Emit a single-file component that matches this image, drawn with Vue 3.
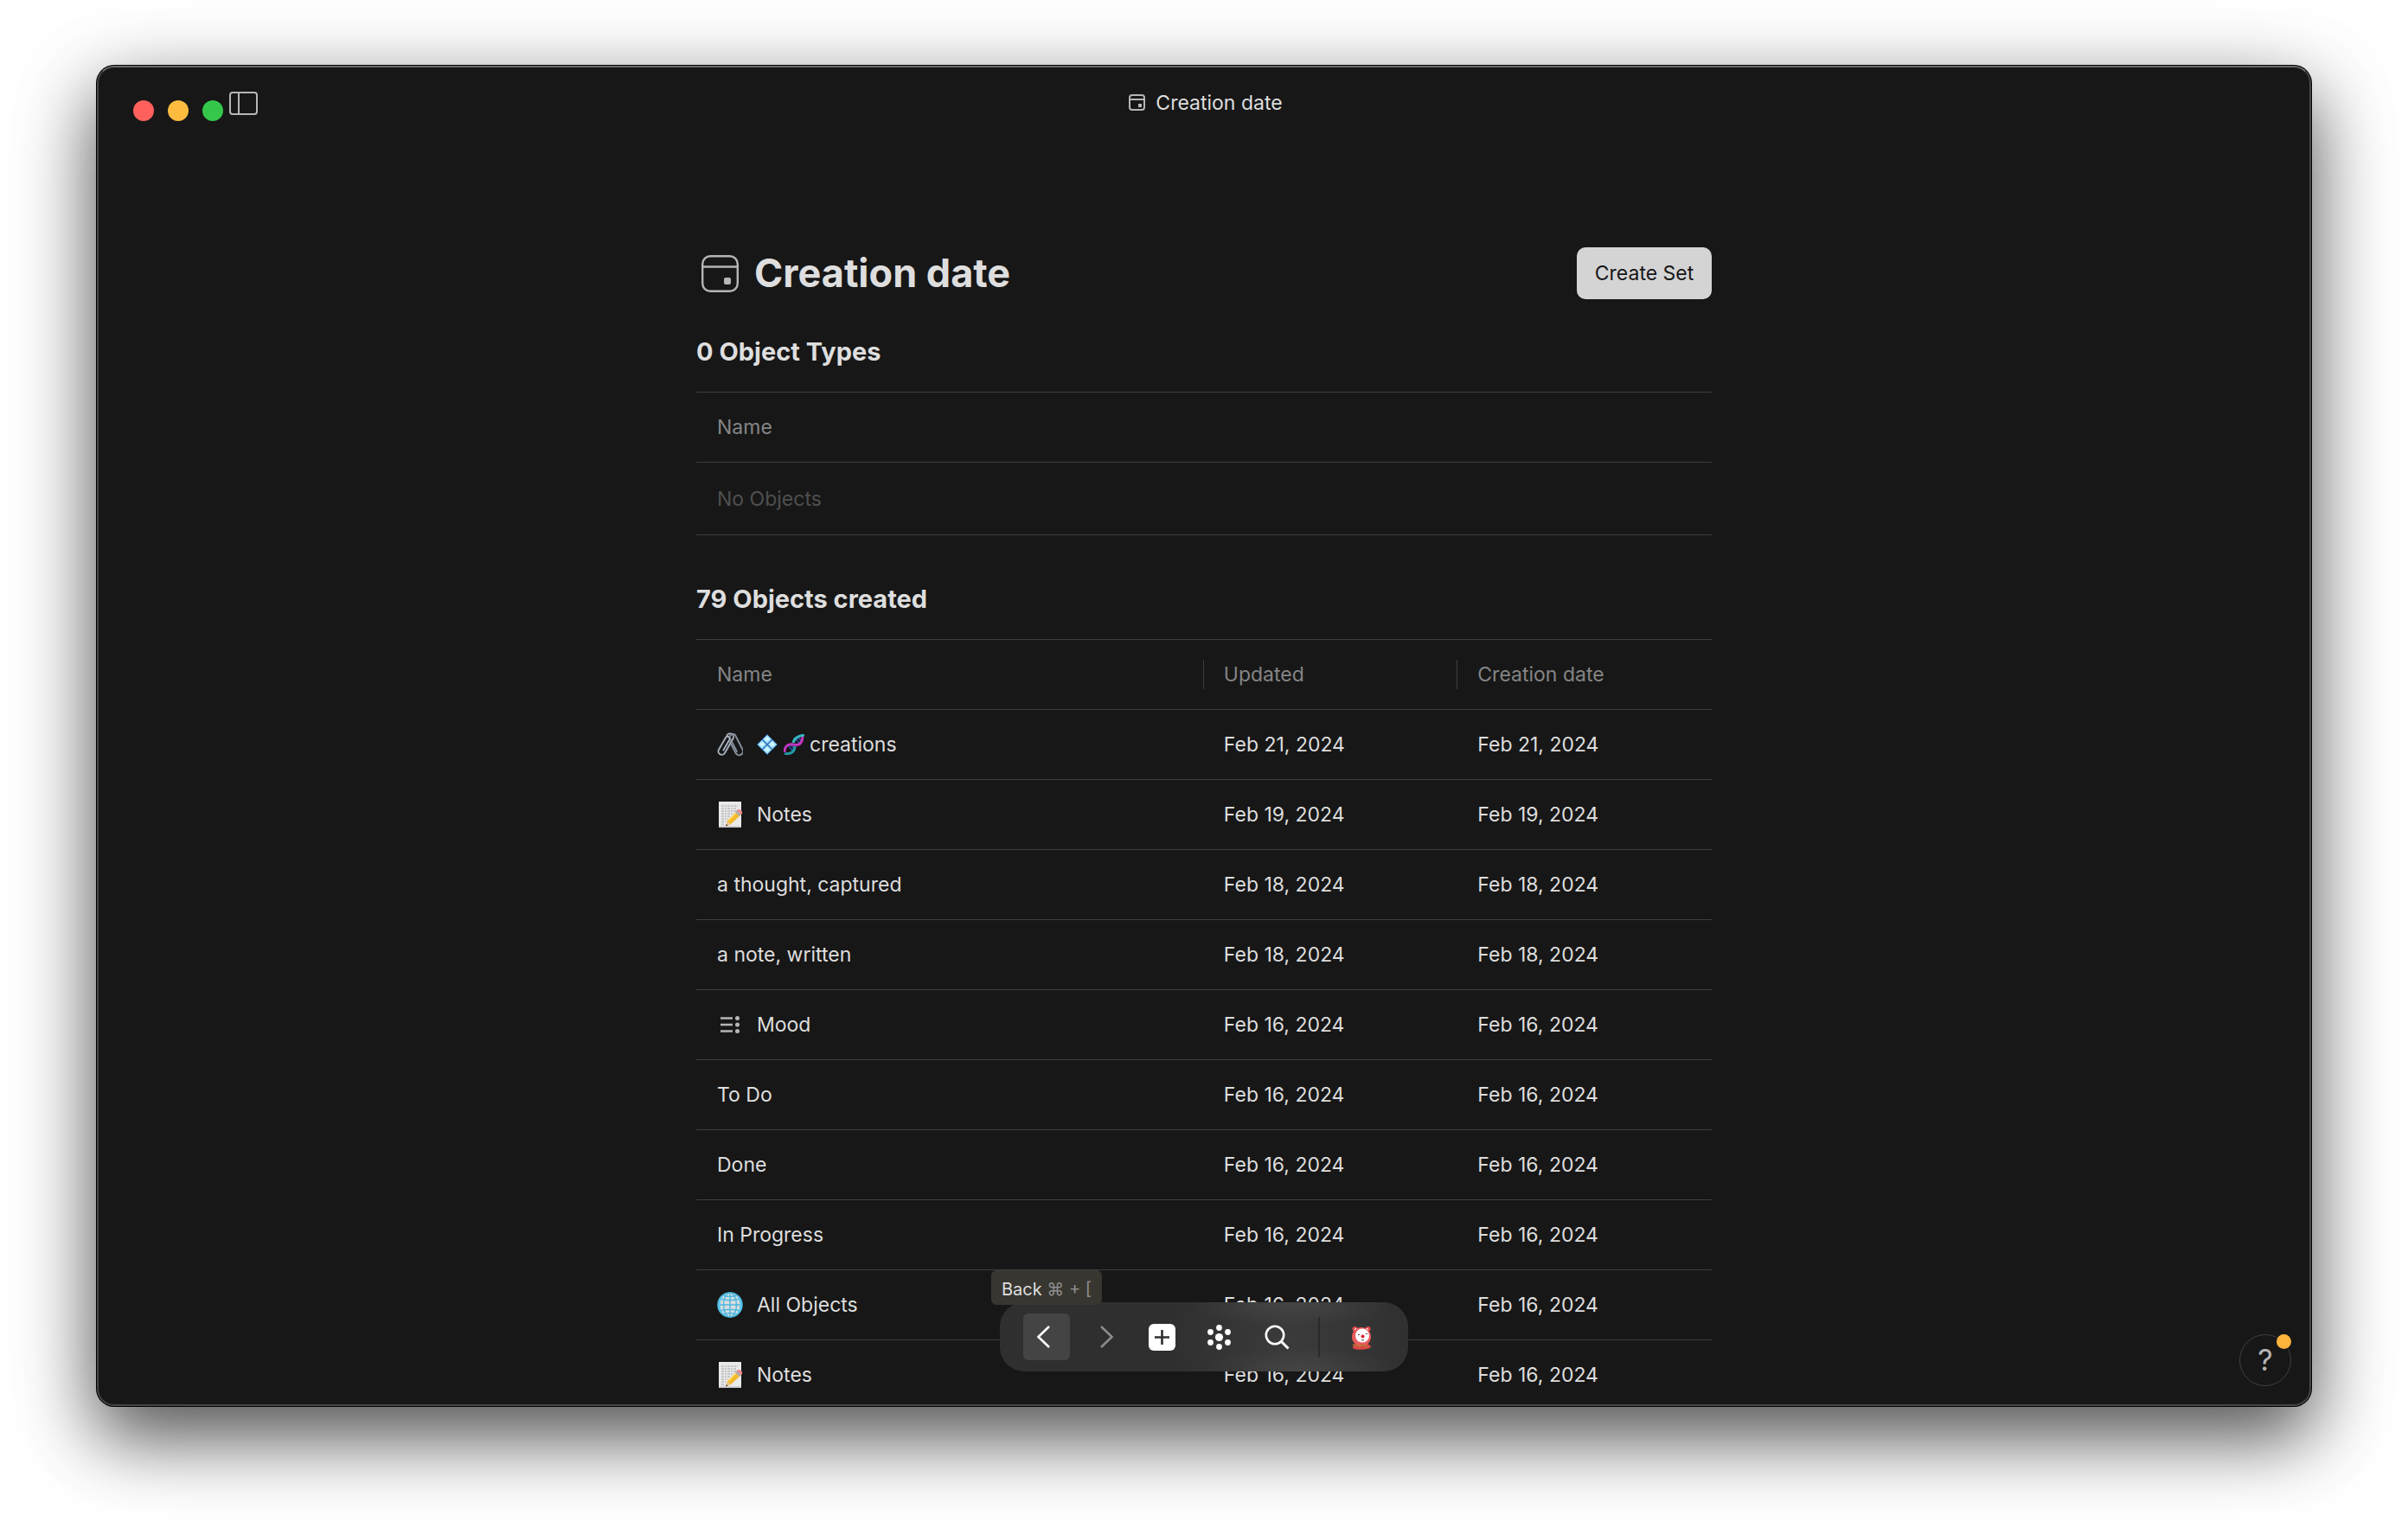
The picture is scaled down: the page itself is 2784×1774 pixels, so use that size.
<script setup>
const objects = [
  { icon: 'clips', name: 'creations', prefix: true, updated: 'Feb 21, 2024', created: 'Feb 21, 2024' },
  { icon: 'memo', name: 'Notes', updated: 'Feb 19, 2024', created: 'Feb 19, 2024' },
  { name: 'a thought, captured', updated: 'Feb 18, 2024', created: 'Feb 18, 2024' },
  { name: 'a note, written', updated: 'Feb 18, 2024', created: 'Feb 18, 2024' },
  { icon: 'relation', name: 'Mood', updated: 'Feb 16, 2024', created: 'Feb 16, 2024' },
  { name: 'To Do', updated: 'Feb 16, 2024', created: 'Feb 16, 2024' },
  { name: 'Done', updated: 'Feb 16, 2024', created: 'Feb 16, 2024' },
  { name: 'In Progress', updated: 'Feb 16, 2024', created: 'Feb 16, 2024' },
  { icon: 'globe', name: 'All Objects', updated: 'Feb 16, 2024', created: 'Feb 16, 2024' },
  { icon: 'memo', name: 'Notes', updated: 'Feb 16, 2024', created: 'Feb 16, 2024' },
]
</script>

<template>
  <div class="desktop">
    <div class="window">
      <header class="titlebar">
        <div class="controls">
          <div class="lights">
            <button class="light red" aria-label="Close"></button>
            <button class="light yellow" aria-label="Minimize"></button>
            <button class="light green" aria-label="Zoom"></button>
          </div>
          <button class="plain" aria-label="Toggle sidebar">
            <svg width="33" height="27" viewBox="0 0 33 27" fill="none" stroke="#b6b6b6" stroke-width="2">
              <rect x="1" y="1" width="31" height="25" rx="3" />
              <path d="M11 1v25" />
            </svg>
          </button>
        </div>
        <div class="crumb">
          <svg width="20" height="20" viewBox="0 0 20 20" fill="none" stroke="#b6b6b6" stroke-width="2">
            <rect x="1" y="1" width="17" height="17" rx="3" />
            <path d="M1 6h17" />
            <rect x="11" y="11" width="4" height="4" fill="#b6b6b6" stroke="none" />
          </svg>
          <span>Creation date</span>
        </div>
      </header>

      <main class="page">
        <div class="head">
          <svg width="43" height="43" viewBox="0 0 43 43" fill="none" stroke="#b6b6b6" stroke-width="2.4">
            <rect x="1.2" y="1.2" width="40.6" height="40.6" rx="9" />
            <path d="M1 13.5h41" />
            <rect x="26" y="26" width="8" height="8" rx="2" fill="#b6b6b6" stroke="none" />
          </svg>
          <h1>Creation date</h1>
          <button class="create">Create Set</button>
        </div>

        <section class="block first">
          <h2>0 Object Types</h2>
          <table>
            <thead>
              <tr><th scope="col"><span class="cell">Name</span></th></tr>
            </thead>
            <tbody>
              <tr class="empty"><td><span class="cell">No Objects</span></td></tr>
            </tbody>
          </table>
        </section>

        <section class="block">
          <h2>79 Objects created</h2>
          <table>
            <colgroup>
              <col class="col-name" />
              <col class="col-date" />
              <col />
            </colgroup>
            <thead>
              <tr>
                <th scope="col"><span class="cell">Name</span></th>
                <th scope="col"><span class="cell divided">Updated</span></th>
                <th scope="col"><span class="cell divided">Creation date</span></th>
              </tr>
            </thead>
            <tbody>
              <tr v-for="(o, i) in objects" :key="i">
                <td>
                  <span class="cell">
                    <svg v-if="o.icon === 'clips'" class="icon" viewBox="0 0 30 30" fill="none" stroke-linecap="round">
                      <g transform="translate(21 15) rotate(-27)">
                        <path d="M-1 8V-9a3.500 3.500 0 0 1 7 0V9a4.500 4.500 0 0 1-9 0V-6" transform="translate(-1 0)" stroke="#5d6570" stroke-width="2.2" />
                        <path d="M-1 8V-9a3.500 3.500 0 0 1 7 0V9a4.500 4.500 0 0 1-9 0V-6" transform="translate(-1 0)" stroke="#98a2ad" stroke-width="1" />
                      </g>
                      <g transform="translate(10 15) rotate(30)">
                        <path d="M1 7V-7a2.500 2.500 0 0 0-5 0V9a4 4 0 0 0 8 0V-10a4 4 0 0 0-8 0" stroke="#5d6570" stroke-width="2.4" />
                        <path d="M1 7V-7a2.500 2.500 0 0 0-5 0V9a4 4 0 0 0 8 0V-10a4 4 0 0 0-8 0" stroke="#c3cad2" stroke-width="1.1" />
                      </g>
                    </svg>
                    <svg v-else-if="o.icon === 'memo'" class="icon" viewBox="0 0 30 30">
                      <path d="M2 0h26v30H2z" fill="#e9e9ea" />
                      <path d="M2 28h26v2H2z" fill="#cfcfd1" />
                      <path d="M5 5h19M5 8h17M5 11h18M5 14h14M5 17h10M5 20h8M5 23h5M5 26h4" stroke="#a3a3a6" stroke-width="1" stroke-dasharray="3 1 2 1" />
                      <path d="M10 28l2-6L23 11l5 4-12 11z" fill="#f4b92c" />
                      <path d="M13 22L23 12" stroke="#ffdc6a" stroke-width="1.5" />
                      <path d="M10 28.5l2-6 4 3.5z" fill="#e9c48d" />
                      <path d="M10 28.5l1-2.500 1.500 1.500z" fill="#333" />
                      <path d="M21 12.5l2-2.500 5 4.500-2 2.500z" fill="#a9adb3" />
                      <path d="M22.500 10.500c2-3 6-1 6.500 1.500.5 1.500-.5 2.500-1 3z" fill="#f08c8c" />
                    </svg>
                    <svg v-else-if="o.icon === 'globe'" class="icon" viewBox="0 0 30 30" fill="none">
                      <circle cx="15" cy="15" r="14" fill="#d9dde0" stroke="#46b4dc" stroke-width="1.6" />
                      <g stroke="#4bb8de" stroke-width="1.4">
                        <ellipse cx="15" cy="15" rx="7.5" ry="14" />
                        <path d="M15 1v28M1 15h28M3 8q12 3.500 24 0M3 22q12-3.500 24 0M7 4q8 3 16 0M7 26q8-3 16 0" />
                      </g>
                      <path d="M6 5Q-1 15 6 25M24 5q7 10 0 20" stroke="#63c6e8" stroke-width="2" />
                    </svg>
                    <svg v-else-if="o.icon === 'relation'" class="icon" viewBox="0 0 30 30">
                      <path d="M4 7.5h14M4 15h14M4 22.500h14" stroke="#b6b6b6" stroke-width="2.5" />
                      <g fill="#b6b6b6">
                        <circle cx="23.500" cy="7.5" r="2.5" />
                        <circle cx="23.500" cy="15" r="2.5" />
                        <circle cx="23.500" cy="22.500" r="2.5" />
                      </g>
                    </svg>
                    <span v-if="o.prefix" class="emojis">
                      <svg width="24" height="24" viewBox="0 0 24 24">
                        <path d="M12 0l12 12-12 12L0 12z" fill="#2f6cb8" />
                        <g fill="#a5e4fb">
                          <path d="M12 1l5 5-5 5-5-5z" />
                          <path d="M12 13l5 5-5 5-5-5z" />
                          <path d="M6 7l5 5-5 5-5-5z" />
                          <path d="M18 7l5 5-5 5-5-5z" />
                        </g>
                        <g fill="#d4f6ff">
                          <path d="M12 3l3 3-3 2-3-2zM6 9l3 3-3 2-3-2zM18 9l3 3-3 2-3-2zM12 15l3 3-3 2-3-2z" />
                        </g>
                      </svg>
                      <svg width="24" height="24" viewBox="0 0 24 24" fill="none">
                        <path d="M5 13l6 7M8 12l5 6M13 5l6 6M16 4l5 4" stroke="#2d4fb0" stroke-width="1.5" />
                        <path d="M1 23c8 0 12-3 12-9" stroke="#239aa6" stroke-width="3" />
                        <path d="M1 21c0-8 5-10 10-9s10 1 11-9" stroke="#c436c0" stroke-width="3" />
                        <path d="M11 10c1-6 6-8 13-9" stroke="#37b9c0" stroke-width="3" />
                      </svg>
                    </span>
                    <span>{{ o.name }}</span>
                  </span>
                </td>
                <td><span class="cell">{{ o.updated }}</span></td>
                <td><span class="cell">{{ o.created }}</span></td>
              </tr>
            </tbody>
          </table>
        </section>
      </main>

      <nav class="toolbar" aria-label="Navigation">
        <button class="tool active" aria-label="Back">
          <svg width="54" height="54" viewBox="0 0 54 54" fill="none" stroke="#fff" stroke-width="2.6">
            <path d="M30 15L17.500 27L30 39" />
          </svg>
        </button>
        <button class="tool" aria-label="Forward">
          <svg width="54" height="54" viewBox="0 0 54 54" fill="none" stroke="#8c8c8c" stroke-width="2.6">
            <path d="M23 15L35.500 27L23 39" />
          </svg>
        </button>
        <button class="tool" aria-label="Create">
          <svg width="54" height="54" viewBox="0 0 54 54">
            <rect x="11" y="12" width="31" height="31" rx="6" fill="#fff" />
            <path d="M26.500 19v17M18 27.500h17" stroke="#2f2f2f" stroke-width="2.6" />
          </svg>
        </button>
        <button class="tool" aria-label="Graph">
          <svg width="54" height="54" viewBox="0 0 54 54" fill="#fff">
            <circle cx="25.500" cy="27.500" r="4.6" />
            <circle cx="25.500" cy="16.500" r="3.4" />
            <circle cx="25.500" cy="38.500" r="3.4" />
            <circle cx="15.500" cy="21.500" r="3.4" />
            <circle cx="35.500" cy="21.500" r="3.4" />
            <circle cx="15.500" cy="33.500" r="3.4" />
            <circle cx="35.500" cy="33.500" r="3.4" />
          </svg>
        </button>
        <button class="tool" aria-label="Search">
          <svg width="54" height="54" viewBox="0 0 54 54" fill="none" stroke="#fff" stroke-width="2.6">
            <circle cx="23" cy="25" r="10.2" />
            <path d="M30.500 32.500l8 8" stroke-width="3" />
          </svg>
        </button>
        <span class="divider"></span>
        <button class="tool" aria-label="Space">
          <svg width="54" height="54" viewBox="0 0 54 54">
            <circle cx="19.500" cy="18" r="3" fill="#e04a4c" />
            <circle cx="34.500" cy="18" r="3" fill="#e04a4c" />
            <circle cx="20.500" cy="18.500" r="1.5" fill="#fff" />
            <circle cx="33.500" cy="18.500" r="1.5" fill="#fff" />
            <path d="M17 40c0-4 3-5 5-5h10c3 0 6 2 6 4-3 3-18 4-21 1z" fill="#dd4648" />
            <circle cx="27" cy="27" r="11" fill="#e85a5c" />
            <circle cx="28" cy="25.500" r="8" fill="#fff" />
            <path d="M17 36l8 2 4-2 5 3" fill="none" stroke="#b5762b" stroke-width="1.5" />
            <circle cx="28.500" cy="26.500" r="2" fill="#d8232c" />
            <path d="M23 24.500h2M32 23.500h2M27 30.500q2 1 3 0" fill="none" stroke="#444" stroke-width="1" />
          </svg>
        </button>
        <div class="tooltip" role="tooltip">Back <span>⌘ + [</span></div>
      </nav>

      <button class="help" aria-label="Help">?<i></i></button>
    </div>
  </div>
</template>

<style>
body {
  margin: 0;
  background: #fff;
}
</style>

<style scoped>
* {
  box-sizing: border-box;
}

.desktop {
  height: 100vh;
  padding: 76px 112px 148px;
  overflow: hidden;
  color: #dedede;
  font-family: Inter, "Liberation Sans", sans-serif;
  font-size: 23px;
  line-height: 30px;
}

.window {
  position: relative;
  height: 100%;
  overflow: hidden;
  border-radius: 20px;
  background: #171717;
  box-shadow:
    0 0 0 1px #000,
    0 36px 84px rgba(0, 0, 0, 0.62),
    0 20px 110px rgba(0, 0, 0, 0.16);
}

.window::after {
  content: "";
  position: absolute;
  inset: 0;
  border: 2px solid #454545;
  border-top-color: #6a6a6a;
  border-radius: 20px;
  pointer-events: none;
}

button {
  padding: 0;
  border: 0;
  background: none;
  color: inherit;
  font: inherit;
}

svg {
  display: block;
  flex: none;
}

.titlebar {
  display: grid;
  grid-template-columns: 1fr auto 1fr;
  align-items: center;
  height: 86px;
}

.controls {
  display: flex;
  align-items: center;
  gap: 7px;
  padding-left: 42px;
}

.lights {
  display: flex;
  gap: 16px;
  padding-top: 18px;
}

.light {
  width: 24px;
  height: 24px;
  border-radius: 50%;
}

.red {
  background: #ff605c;
}

.yellow {
  background: #fdbb40;
}

.green {
  background: #34c74b;
}

.crumb {
  display: flex;
  align-items: center;
  gap: 11px;
  padding-left: 4px;
}

.page {
  width: 100%;
  max-width: 1174px;
  margin: 0 auto;
  padding-top: 124px;
}

.head {
  display: flex;
  align-items: center;
  gap: 18px;
  padding-left: 6px;
}

h1 {
  flex: 1;
  margin: 0;
  font-size: 45px;
  font-weight: 700;
  line-height: 56px;
}

.create {
  min-width: 156px;
  height: 60px;
  padding: 0 20px;
  border-radius: 10px;
  background: #d4d4d4;
  color: #171717;
}

.block {
  padding-top: 56px;
}

.first {
  padding-top: 43px;
}

h2 {
  margin: 0 0 28px;
  font-size: 29px;
  font-weight: 700;
  line-height: 36px;
}

table {
  width: 100%;
  border-top: 1px solid #3e3e3e;
  border-spacing: 0;
  table-layout: fixed;
}

.col-name {
  width: 49.9%;
}

.col-date {
  width: 25%;
}

th,
td {
  height: 81px;
  padding: 0;
  border-bottom: 1px solid #3e3e3e;
  font-weight: 400;
  text-align: left;
}

th {
  color: #858585;
}

.empty td {
  height: 84px;
  color: #4f4f4f;
}

.cell {
  display: flex;
  align-items: center;
  gap: 16px;
  height: 34px;
  padding: 0 24px;
}

.divided {
  padding-left: 23px;
  border-left: 1px solid #3e3e3e;
}

.icon {
  width: 30px;
  height: 30px;
}

.emojis {
  display: flex;
  gap: 7px;
  margin-right: -10px;
}

.toolbar {
  position: absolute;
  bottom: 40px;
  left: 50%;
  display: flex;
  align-items: center;
  gap: 13px;
  height: 80px;
  padding: 0 27px;
  border-radius: 28px;
  background:
    radial-gradient(ellipse 120px 28px at 71% 0, rgba(255, 255, 255, 0.07), transparent),
    radial-gradient(ellipse 120px 28px at 74% 100%, rgba(255, 255, 255, 0.07), transparent),
    radial-gradient(ellipse 150px 120px at 72% 50%, rgba(255, 255, 255, 0.06), transparent),
    #2f2f2f;
  transform: translateX(-50%);
}

.tool {
  width: 54px;
  height: 54px;
  border-radius: 6px;
}

.active {
  background: #444;
}

.divider {
  width: 2px;
  height: 46px;
  margin: 0 8px 0 6px;
  background: #2a2a2a;
}

.tooltip {
  position: absolute;
  bottom: 77px;
  left: -10px;
  height: 40px;
  padding: 0 12px;
  border-radius: 6px;
  background: #383631;
  font-size: 20px;
  line-height: 44px;
  white-space: nowrap;
}

.tooltip span {
  color: #8c8c8c;
}

.help {
  position: absolute;
  right: 23px;
  bottom: 23px;
  width: 60px;
  height: 60px;
  border: 1px solid #3f3f3f;
  border-radius: 50%;
  color: #b6b6b6;
  font-size: 34px;
  line-height: 56px;
}

.help i {
  position: absolute;
  top: -1px;
  right: -1px;
  width: 17px;
  height: 17px;
  border-radius: 50%;
  background: #ffb43c;
}
</style>
